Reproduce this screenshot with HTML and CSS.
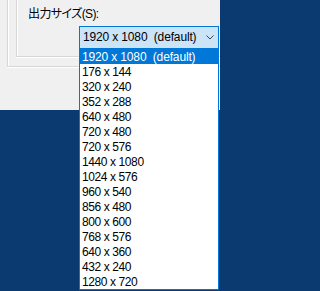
FILE: index.html
```html
<!DOCTYPE html>
<html lang="ja">
<head>
<meta charset="utf-8">
<title>出力サイズ</title>
<link rel="stylesheet" href="styles.css">
</head>
<body>
<div class="dialog">
  <div class="page">
    <div class="group">
      <div class="label">出力サイズ(S):</div>
      <div class="combo-wrap">
        <div class="combo">
          <span class="combo-text">1920 x 1080&nbsp; (default)</span>
          <svg class="chevron" width="8" height="5" viewBox="0 0 8 5"><path d="M0.5 0.5 L4 4 L7.5 0.5" fill="none" stroke="#444" stroke-width="1"/></svg>
        </div>
        <ul class="list">
          <li class="item selected">1920 x 1080&nbsp; (default)</li>
          <li class="item">176 x 144</li>
          <li class="item">320 x 240</li>
          <li class="item">352 x 288</li>
          <li class="item">640 x 480</li>
          <li class="item">720 x 480</li>
          <li class="item">720 x 576</li>
          <li class="item">1440 x 1080</li>
          <li class="item">1024 x 576</li>
          <li class="item">960 x 540</li>
          <li class="item">856 x 480</li>
          <li class="item">800 x 600</li>
          <li class="item">768 x 576</li>
          <li class="item">640 x 360</li>
          <li class="item">432 x 240</li>
          <li class="item">1280 x 720</li>
        </ul>
      </div>
    </div>
  </div>
</div>
</body>
</html>
```
FILE: styles.css
```css
html, body {
  margin: 0;
  padding: 0;
}
body {
  width: 220px;
  height: 291px;
  overflow: hidden;
  background: #0b3a71;
  font-family: "Liberation Sans", "Noto Sans CJK JP", sans-serif;
  font-size: 12px;
  color: #000;
}
.dialog {
  width: 220px;
  height: 110px;
  background: #f0f0f0;
}
.page {
  box-sizing: border-box;
  margin-left: 7px;
  width: 213px;
  height: 67px;
  border-left: 1px solid #d7d7d7;
  border-bottom: 1px solid #d7d7d7;
  box-shadow: inset 1px 0 0 #fff, 0 1px 0 #fff;
}
.group {
  box-sizing: border-box;
  margin-left: 8px;
  width: 204px;
  height: 57px;
  border-left: 1px solid #d7d7d7;
  border-bottom: 1px solid #d7d7d7;
  box-shadow: inset 1px 0 0 #fff, 0 1px 0 #fff;
  padding: 7px 0 0 11px;
  display: flex;
  flex-direction: column;
  align-items: flex-start;
  gap: 4px;
}
.label {
  line-height: 15px;
  height: 15px;
  font-feature-settings: "palt";
  letter-spacing: -0.6px;
  white-space: nowrap;
}
.combo-wrap {
  position: relative;
  margin-left: 51px;
  width: 140px;
}
.combo {
  box-sizing: border-box;
  height: 23px;
  border: 1px solid #0078d7;
  background: #cce4f7;
  display: flex;
  align-items: flex-start;
  justify-content: space-between;
  padding-left: 3px;
}
.combo-text {
  line-height: 20px;
  letter-spacing: -0.15px;
  white-space: nowrap;
}
.chevron {
  margin-top: 8px;
  margin-right: 4px;
}
.list {
  position: absolute;
  left: 0;
  top: 22px;
  box-sizing: border-box;
  width: 140px;
  margin: 0;
  padding: 0;
  list-style: none;
  background: #fff;
  border: 1px solid #0078d7;
}
.item {
  height: 15px;
  box-sizing: border-box;
  padding: 2px 0 0 2px;
  line-height: 13px;
  letter-spacing: -0.4px;
  white-space: nowrap;
}
.item.selected {
  background: #0078d7;
  color: #fff;
  letter-spacing: -0.15px;
}
```
